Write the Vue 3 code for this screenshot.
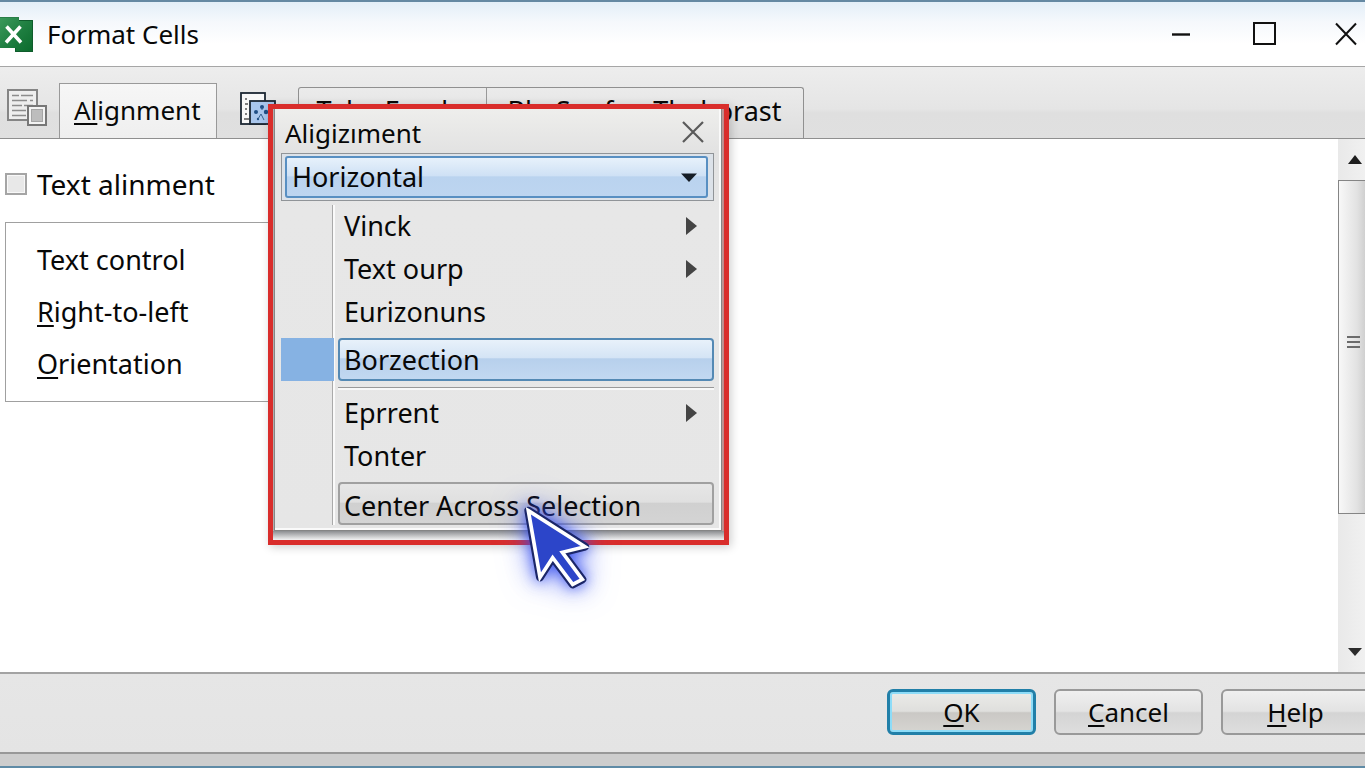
<script setup>
import { ref } from 'vue'

const wrapChecked = ref(false)
const axis = ref('Horizontal')

const controls = [
  { key: '', rest: 'Text control' },
  { key: 'R', rest: 'ight-to-left' },
  { key: 'O', rest: 'rientation' },
]

const upperItems = [
  { label: 'Vinck', submenu: true },
  { label: 'Text ourp', submenu: true },
  { label: 'Eurizonuns', submenu: false },
]

const lowerItems = [
  { label: 'Eprrent', submenu: true },
  { label: 'Tonter', submenu: false },
]

const actions = [
  { key: 'O', rest: 'K', primary: true },
  { key: 'C', rest: 'ancel', primary: false },
  { key: 'H', rest: 'elp', primary: false },
]
</script>

<template>
  <div class="window">
    <header class="titlebar">
      <svg class="logo" width="33" height="36" viewBox="0 0 33 36" aria-hidden="true">
        <defs>
          <linearGradient id="logoGreen" x1="0" y1="0" x2="1" y2="1">
            <stop offset="0" stop-color="#3c9a5c" />
            <stop offset="0.5" stop-color="#1f7f41" />
            <stop offset="1" stop-color="#0b6a2c" />
          </linearGradient>
        </defs>
        <path d="M0 0H19V3H33V35H15V31H0Z" fill="url(#logoGreen)" />
        <path d="M19 3.5H32.500V34.500H15.500V31" fill="none" stroke="#0f5c2c" />
        <path d="M0 .5H18.500V3" fill="none" stroke="#2a7f48" />
        <path d="M6.500 9.500L21 25.500M20.500 9.500L6 25.500" stroke="#fff" stroke-width="3.500" />
      </svg>
      <h1 class="title">Format Cells</h1>
      <div class="window-buttons">
        <button type="button" aria-label="Minimize">
          <svg width="24" height="24" viewBox="0 0 24 24"><path d="M2 12.500H20" stroke="#111" stroke-width="2.400" /></svg>
        </button>
        <button type="button" aria-label="Maximize">
          <svg width="24" height="24" viewBox="0 0 24 24"><rect x="2" y="1" width="21" height="21" fill="none" stroke="#111" stroke-width="2" /></svg>
        </button>
        <button type="button" aria-label="Close">
          <svg width="24" height="24" viewBox="0 0 24 24"><path d="M2 1.500L22 22.500M22 1.500L2 22.500" stroke="#111" stroke-width="2" /></svg>
        </button>
      </div>
    </header>

    <nav class="tabbar">
      <button type="button" class="icon-tab" aria-label="Number">
        <svg width="40" height="38" viewBox="0 0 40 38">
          <rect x="1" y="1" width="29" height="30" fill="#eee" stroke="#858585" stroke-width="2" />
          <path d="M5 6.500H12M14 6.500H26M5 11.500H20M23 11.500H26M5 16.500H15M17 16.500H26M5 21.500H19M5 26.500H19" stroke="#8c8c8c" stroke-width="1.600" />
          <rect x="21" y="17" width="18" height="19" fill="#f3f3f3" stroke="#777" stroke-width="2" />
          <rect x="24.500" y="20.500" width="11" height="12" fill="#bdbdbd" stroke="#a5a5a5" />
        </svg>
      </button>
      <button type="button" class="tab active"><u>Al</u>ignment</button>
      <button type="button" class="icon-tab second" aria-label="Font">
        <svg width="36" height="34" viewBox="0 0 36 34">
          <rect x="1" y="1" width="24" height="31" fill="#f8f8f8" stroke="#1c2733" stroke-width="1.800" />
          <path d="M5 7H7M5 12H8M5 17H7M5 22H7M4 27H9" stroke="#555" stroke-width="1.500" />
          <rect x="10" y="9" width="25" height="23" fill="#a9c6ec" stroke="#1c2733" stroke-width="1.800" />
          <g fill="#1f4f86"><circle cx="22" cy="15" r="2" /><circle cx="16" cy="20" r="2" /><circle cx="26" cy="20" r="2.200" /><circle cx="18" cy="27" r="1.200" /><circle cx="29" cy="27" r="1.200" /></g>
          <path d="M18 27L21 22L24 28M22 15V18" stroke="#35608f" fill="none" />
        </svg>
      </button>
      <div class="tab-group">
        <button type="button" class="tab">Toba Food</button>
        <button type="button" class="tab">Bln Sunfon Theborast</button>
      </div>
    </nav>

    <main class="content">
      <section class="form">
        <label class="check">
          <input v-model="wrapChecked" type="checkbox" />
          <span>Text alinment</span>
        </label>
        <div class="group">
          <p v-for="c in controls" :key="c.rest"><u v-if="c.key">{{ c.key }}</u>{{ c.rest }}</p>
        </div>
      </section>
      <aside class="scrollbar">
        <button type="button" aria-label="Scroll up">
          <svg width="16" height="10" viewBox="0 0 16 10"><path d="M8 0L15 9H1Z" fill="#1d1d1d" /></svg>
        </button>
        <div class="track">
          <div class="thumb"><i></i><i></i><i></i></div>
        </div>
        <button type="button" aria-label="Scroll down">
          <svg width="16" height="10" viewBox="0 0 16 10"><path d="M8 9L15 1H1Z" fill="#2b2b2b" /></svg>
        </button>
      </aside>
    </main>

    <footer class="footer">
      <div class="actions">
        <button v-for="a in actions" :key="a.key" type="button" class="action" :class="{ primary: a.primary }">
          <span><u>{{ a.key }}</u>{{ a.rest }}</span>
        </button>
      </div>
    </footer>
    <div class="bottom-edge"></div>

    <div class="callout">
      <div class="panel">
        <div class="panel-head">
          <h2>Aligizıment</h2>
          <button type="button" aria-label="Close panel">
            <svg width="24" height="24" viewBox="0 0 24 24"><path d="M2 2L22 22M22 2L2 22" stroke="#5a5a5a" stroke-width="2.200" /></svg>
          </button>
        </div>
        <div class="combo">
          <select v-model="axis" aria-label="Direction">
            <option>Horizontal</option>
            <option>Vertical</option>
          </select>
          <svg class="caret" width="16" height="9" viewBox="0 0 16 9" aria-hidden="true"><path d="M0 .5H16L8 9Z" fill="#151d26" /></svg>
        </div>
        <div class="menu">
          <button v-for="m in upperItems" :key="m.label" type="button" class="item">
            {{ m.label }}
            <svg v-if="m.submenu" width="11" height="20" viewBox="0 0 11 20"><path d="M0 1L11 10L0 19Z" fill="#444" /></svg>
          </button>
          <div class="selected-row">
            <button type="button" class="item boxed selected">Borzection</button>
          </div>
          <hr />
          <button v-for="m in lowerItems" :key="m.label" type="button" class="item">
            {{ m.label }}
            <svg v-if="m.submenu" width="11" height="20" viewBox="0 0 11 20"><path d="M0 1L11 10L0 19Z" fill="#444" /></svg>
          </button>
          <button type="button" class="item boxed hovered">Center Across Selection</button>
        </div>
      </div>
      <svg class="cursor" width="87" height="103" viewBox="99 339 261 309" aria-hidden="true">
        <path d="M145 392L315 500L247 517L307 598L278 613L218 533L180 592Z" fill="none" stroke="#1b2668" stroke-width="24" stroke-linejoin="round" />
        <path d="M145 392L315 500L247 517L307 598L278 613L218 533L180 592Z" fill="#2c45c9" stroke="#fff" stroke-width="11" />
      </svg>
    </div>
  </div>
</template>

<style>
html,
body {
  margin: 0;
  overflow: hidden;
}
</style>

<style scoped>
.window {
  position: relative;
  display: flex;
  flex-direction: column;
  box-sizing: border-box;
  min-height: 100vh;
  overflow: hidden;
  border-top: 2px solid #6589a3;
  border-bottom: 2px solid #5f8ba6;
  background: #fff;
  color: #080808;
  font-family: "Noto Sans", "Open Sans", sans-serif;
  font-size: 27px;
  line-height: 32px;
}

button,
select {
  margin: 0;
  padding: 0;
  border: 0;
  background: none;
  color: inherit;
  font: inherit;
}

button svg {
  display: block;
}

u {
  text-decoration-thickness: 2px;
  text-underline-offset: 3px;
  text-decoration-skip-ink: none;
}

.titlebar {
  display: flex;
  align-items: center;
  height: 64px;
  padding-right: 7px;
  border-bottom: 1px solid #a6a6a6;
  background: linear-gradient(#e3eef8, #f5f8fc 20px, #fff 42px);
}

.logo {
  flex: none;
  margin-top: 2px;
}

.title {
  flex: 1;
  margin: 0 0 0 14px;
  font-size: 26px;
  font-weight: 400;
}

.window-buttons {
  display: flex;
  gap: 58px;
}

.tabbar {
  display: flex;
  align-items: flex-end;
  height: 71px;
  border-bottom: 1px solid #8f8f8f;
  background: linear-gradient(#ededed, #e5e5e5 42px, #dfdfdf 46px, #e0e0e0);
  font-size: 26px;
}

.icon-tab {
  margin: 0 12px 11px 7px;
}

.icon-tab.second {
  margin: 0 22px 12px 23px;
}

.tab {
  box-sizing: border-box;
  height: 50px;
  padding: 0 18px 5px;
}

.tab.active {
  height: 55px;
  padding: 0 15px 2px 14px;
  border: 1px solid #999;
  border-bottom: 0;
  background: linear-gradient(#f6f6f6, #efefef);
}

.tab-group {
  display: flex;
  border: 1px solid #909090;
  border-bottom: 0;
  border-radius: 3px 3px 0 0;
  background: linear-gradient(#ebebeb, #dedede);
  font-size: 27px;
}

.tab-group .tab:first-child {
  min-width: 187px;
  text-align: left;
}

.tab-group .tab + .tab {
  min-width: 317px;
  border-left: 1px solid #999;
}

.content {
  display: flex;
  flex: 1;
}

.form {
  flex: 1;
  padding: 29px 0 0 5px;
}

.check {
  display: flex;
  align-items: center;
  gap: 10px;
  font-size: 28px;
}

.check input {
  appearance: none;
  box-sizing: border-box;
  width: 22px;
  height: 22px;
  margin: 0;
  border: 2px solid #a5a5a5;
  background: #e8e8e8;
  box-shadow: inset 0 0 0 1px #f8f8f8;
}

.group {
  box-sizing: border-box;
  width: 400px;
  margin-top: 22px;
  padding: 21px 0 11px 31px;
  border: 1px solid #a0a0a0;
}

.group p {
  margin: 0 0 20px;
}

.group p:last-child {
  margin-bottom: 10px;
}

.scrollbar {
  display: flex;
  flex-direction: column;
  width: 34px;
  margin-right: -7px;
  background: linear-gradient(90deg, #e9e9e9, #f2f2f2);
}

.scrollbar button {
  display: grid;
  place-items: center;
  height: 41px;
}

.track {
  flex: 1;
}

.thumb {
  display: flex;
  flex-direction: column;
  align-items: center;
  justify-content: center;
  gap: 3px;
  box-sizing: border-box;
  height: 74%;
  padding: 0 4px 10px 0;
  border: 1px solid #858585;
  background: linear-gradient(90deg, #f8f8f8, #e2e2e2 18px, #c2c2c2);
}

.thumb i {
  width: 13px;
  height: 2px;
  background: #6b6b6b;
}

.footer {
  display: flex;
  justify-content: flex-end;
  padding: 15px 0 17px;
  border-top: 2px solid #a3a3a3;
  background: linear-gradient(#e6e6e6, #e4e4e4);
}

.actions {
  display: flex;
  gap: 18px;
  margin-right: -5px;
}

.action {
  box-sizing: border-box;
  width: 149px;
  height: 46px;
  padding-bottom: 1px;
  border: 2px solid #999;
  border-radius: 6px;
  background: linear-gradient(#efefef, #e3e3e3 48%, #d4d4d4 52%, #dedede);
  font-size: 26px;
}

.action.primary {
  border: 3px solid #217fa8;
  background: linear-gradient(#ebebe8, #dfdfdd 48%, #cac8c5 52%, #d6d5d1);
  box-shadow: inset 0 0 0 2px #8ddcf8;
}

.bottom-edge {
  height: 12px;
  border-top: 2px solid #989898;
  background: #cdcdcd;
}

.callout {
  position: absolute;
  top: 102px;
  left: 268px;
  box-sizing: border-box;
  width: 461px;
  padding: 0 2px 9px 1px;
  border: 5px solid #d92d2b;
  background: linear-gradient(90deg, #aaa, #e8e8e8 8px, #e8e8e8 440px, #b88);
  box-shadow: 2px 2px 9px rgba(0, 0, 0, 0.2);
}

.callout::after {
  content: "";
  position: absolute;
  right: 0;
  bottom: 0;
  left: 0;
  height: 9px;
  background: linear-gradient(#8b8d90, #f3f3f3);
}

.panel {
  box-sizing: border-box;
  padding: 0 5px 5px 6px;
  border: 1px solid #858585;
  border-top: 0;
  background: linear-gradient(#eeeeec, #e2e2e2 44px, #e7e7e7 100px, #e6e6e6);
  box-shadow: inset -2px -2px 0 #fafafa;
}

.panel-head {
  display: flex;
  align-items: flex-end;
  justify-content: space-between;
  height: 44px;
  padding: 0 11px 0 4px;
}

.panel-head h2 {
  margin: 0 0 4px;
  font-size: 26px;
  font-weight: 400;
}

.panel-head button {
  margin-bottom: 9px;
}

.combo {
  position: relative;
  display: flex;
  margin-right: 2px;
  padding: 2px 5px 2px 3px;
  border: 1px solid #909498;
  background: #dce2e9;
}

.combo select {
  appearance: none;
  box-sizing: border-box;
  width: 100%;
  height: 42px;
  padding: 0 40px 0 5px;
  border: 2px solid #588fc2;
  border-radius: 3px;
  background: linear-gradient(#e7f1fb, #cfe1f5 46%, #bad3ef 50%, #bdd5f0);
}

.caret {
  position: absolute;
  top: 19px;
  right: 16px;
}

.menu {
  display: flex;
  flex-direction: column;
  margin: 4px 2px 0 0;
  padding-left: 57px;
  background: linear-gradient(90deg, transparent 51px, #aaa 51px, #aaa 52px, #fafafa 52px, #fafafa 54px, transparent 54px);
}

.item {
  display: flex;
  align-items: center;
  justify-content: space-between;
  box-sizing: border-box;
  height: 43px;
  padding: 0 17px 2px 6px;
  text-align: left;
}

.item svg {
  flex: none;
}

.boxed {
  padding: 1px 0 0 4px;
  border: 2px solid #a0a0a0;
  border-radius: 4px;
}

.selected-row {
  display: flex;
  flex-direction: column;
  margin: 4px 0 0 -57px;
  padding-left: 57px;
  background: linear-gradient(90deg, #86b2e3 53px, transparent 53px);
}

.selected {
  border-color: #5489b4;
  background: linear-gradient(#e8f1fa, #d4e4f5 46%, #b7d0ec 48%, #c2d8f1);
}

.hovered {
  margin-top: 4px;
  padding-top: 5px;
  background: linear-gradient(#e6e6e6, #e0e0e0 46%, #d0d0d0 50%, #d4d4d4);
}

.menu hr {
  align-self: stretch;
  width: 100%;
  margin: 6px 0 2px;
  border: 0;
  border-top: 1px solid #999;
  border-bottom: 2px solid #f8f8f8;
}

.cursor {
  position: absolute;
  z-index: 1;
  top: 384px;
  left: 240px;
  overflow: visible;
  pointer-events: none;
  filter: drop-shadow(0 0 7px rgba(45, 70, 235, 0.8)) drop-shadow(0 0 14px rgba(60, 85, 245, 0.6));
}
</style>
